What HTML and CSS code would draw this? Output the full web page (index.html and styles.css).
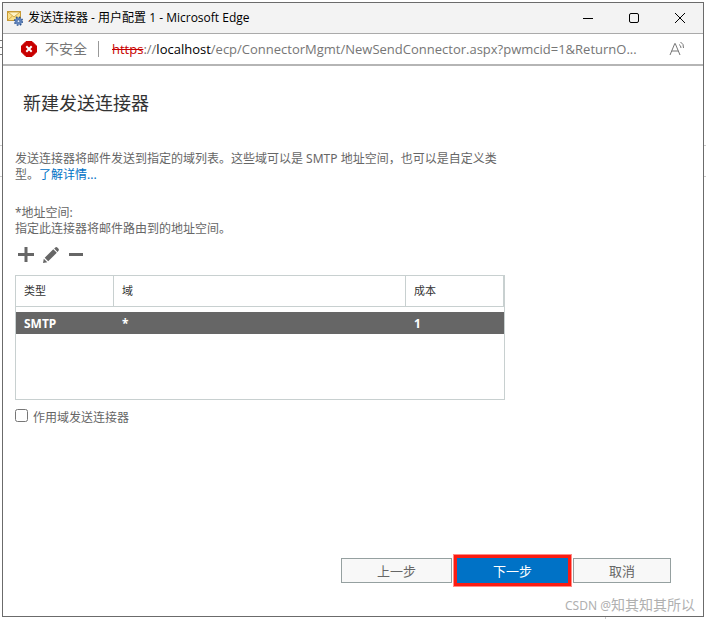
FILE: index.html
```html
<!DOCTYPE html>
<html lang="zh-CN">
<head>
<meta charset="utf-8">
<title>发送连接器 - 用户配置 1 - Microsoft Edge</title>
<link rel="stylesheet" href="styles.css">
</head>
<body>
<div class="window">
  <header class="titlebar">
    <svg class="app-icon" width="16" height="16" viewBox="0 0 16 16" aria-hidden="true">
      <rect x="0.5" y="1.5" width="13" height="9" fill="#fbe08a" stroke="#c79a35"/>
      <path d="M1 10l4.500-4M13 10L8.500 6" stroke="#d9ad4a" fill="none"/>
      <path d="M1 2l6 5 6-5z" fill="#fff3c4" stroke="#c79a35" stroke-width=".8"/>
      <circle cx="11.500" cy="11.200" r="3.600" fill="#5f83bd"/>
      <circle cx="11.500" cy="11.200" r="4" fill="none" stroke="#2f5690" stroke-width="1.500" stroke-dasharray="1.600 1.540"/>
      <circle cx="11.500" cy="11.200" r="1.300" fill="#e6eefb" stroke="#2f5690" stroke-width=".6"/>
    </svg>
    <span class="window-title">发送连接器 - 用户配置 1 - Microsoft Edge</span>
    <div class="window-controls">
      <button type="button" aria-label="最小化"><svg width="12" height="12" viewBox="0 0 12 12"><path d="M1 6.500h10"/></svg></button>
      <button type="button" aria-label="最大化"><svg width="12" height="12" viewBox="0 0 12 12"><rect x="1.500" y="1.500" width="9" height="9" rx="1.500"/></svg></button>
      <button type="button" aria-label="关闭"><svg width="12" height="12" viewBox="0 0 12 12"><path d="M1 1l10 10M11 1L1 11"/></svg></button>
    </div>
  </header>

  <div class="addressbar">
    <svg class="warn-icon" width="16" height="16" viewBox="0 0 16 16" aria-hidden="true">
      <path d="M5 .5h6L15.500 5v6L11 15.500H5L.5 11V5z" fill="#c80000" stroke="#c80000" stroke-linejoin="round"/>
      <path d="M5.300 5.300l5.400 5.400M10.700 5.300l-5.400 5.400" stroke="#fff" stroke-width="2"/>
    </svg>
    <span class="security">不安全</span>
    <span class="divider"></span>
    <span class="url"><s>https</s>://<b>localhost</b>/ecp/ConnectorMgmt/NewSendConnector.aspx?pwmcid=1&amp;ReturnO...</span>
    <button type="button" class="read-aloud" aria-label="大声朗读">
      <svg width="18" height="16" viewBox="0 0 18 16"><path d="M1 14L5.800 2.500h.4L11 14M2.700 10h6.600M10 3.500q2 1 2 3.500M11.500 1q3.500 2 3 6"/></svg>
    </button>
  </div>

  <main class="page">
    <h1>新建发送连接器</h1>
    <p class="intro">发送连接器将邮件发送到指定的域列表。这些域可以是 SMTP 地址空间，也可以是自定义类型。<a href="#">了解详情...</a></p>

    <section class="address-space">
      <h2>*地址空间:</h2>
      <p>指定此连接器将邮件路由到的地址空间。</p>
      <div class="toolbar">
        <button type="button" aria-label="添加"><svg width="16" height="16" viewBox="0 0 16 16"><path d="M6.500 0h3v6H16v3H9.500v6h-3V9H0V6h6.500z"/></svg></button>
        <button type="button" aria-label="编辑"><svg width="16" height="16" viewBox="0 0 16 16"><path d="M0 16l.8-4.300 3.500 3.500zM1.700 10.700L10.300 2.300l3.500 3.500-8.600 8.400zM11.200 1.500L12.300.5q1-.8 2 0l1.200 1.200q.8 1 0 2l-1 1.200z"/></svg></button>
        <button type="button" aria-label="删除"><svg width="16" height="16" viewBox="0 0 16 16"><path d="M1 6h14v3H1z"/></svg></button>
      </div>
      <div class="grid">
        <table>
          <colgroup><col class="col-type"><col><col class="col-cost"></colgroup>
          <thead><tr><th>类型</th><th>域</th><th>成本</th></tr></thead>
          <tbody><tr><td>SMTP</td><td>*</td><td>1</td></tr></tbody>
        </table>
      </div>
      <div class="scoped">
        <input type="checkbox" id="scoped">
        <label for="scoped">作用域发送连接器</label>
      </div>
    </section>

    <footer class="actions">
      <button type="button">上一步</button>
      <button type="button" class="primary">下一步</button>
      <button type="button" class="cancel">取消</button>
    </footer>
  </main>
  <span class="watermark"><small>CSDN @</small>知其知其所以</span>
</div>
</body>
</html>
```
FILE: styles.css
```css
* { box-sizing: border-box; }

body {
  margin: 0;
  padding: 2px;
  font: 12px/16px "Noto Sans", "Noto Sans CJK SC", sans-serif;
  color: #666;
  background:
    linear-gradient(#777, #777) 0 40px / 3px 1px no-repeat,
    linear-gradient(#777, #777) 0 47px / 3px 1px no-repeat,
    linear-gradient(#777, #777) 0 54px / 3px 1px no-repeat,
    linear-gradient(#ccc, #ccc) 0 145px / 100% 1px no-repeat,
    linear-gradient(#ccc, #ccc) 0 176px / 100% 1px no-repeat,
    linear-gradient(#ccc, #ccc) 605px 100% / 1px 2px no-repeat,
    #fff;
}

button {
  margin: 0;
  padding: 0;
  border: 0;
  background: none;
  font: inherit;
  color: inherit;
}

svg {
  display: block;
  flex: none;
}

.window {
  position: relative;
  display: flex;
  flex-direction: column;
  min-height: calc(100vh - 4px);
  border: 1px solid #6b6b6b;
  background: #fff;
}

.titlebar {
  display: flex;
  align-items: center;
  height: 31px;
  padding-left: 4px;
  border-bottom: 1px solid #aaa;
  background: #f3f3f3;
  color: #000;
}

.window-title {
  flex: 1;
  margin-left: 5px;
  font-family: "Open Sans", "Noto Sans CJK SC", sans-serif;
}

.window-controls { display: flex; }

.window-controls button {
  display: grid;
  place-items: center;
  width: 46px;
  height: 30px;
}

.window-controls svg,
.read-aloud svg {
  fill: none;
  stroke: #000;
}

.addressbar {
  display: flex;
  align-items: center;
  height: 32px;
  padding: 0 16px 0 18px;
  border-bottom: 2px solid #b5b5b5;
  font-size: 14px;
  line-height: 20px;
  color: #767676;
}

.security {
  margin-left: 8px;
  white-space: nowrap;
}

.divider {
  width: 1px;
  height: 16px;
  margin: 0 13px 0 11px;
  background: #999;
}

.url {
  flex: 1;
  white-space: nowrap;
  font-family: "Open Sans", sans-serif;
  font-size: 13px;
}

.url s { color: #c80000; }

.url b {
  font-weight: 400;
  color: #000;
}

.read-aloud svg { stroke: #767676; }

.page {
  flex: 1;
  display: flex;
  flex-direction: column;
  padding: 25px 32px 33px 12px;
}

h1 {
  margin: 0 0 36px 8px;
  font-size: 18px;
  line-height: 24px;
  font-weight: 400;
  color: #333;
}

.intro {
  max-width: 490px;
  margin: 0 0 22px;
}

.intro a {
  color: #0072c6;
  text-decoration: none;
}

.address-space { max-width: 490px; }

.address-space h2,
.address-space p {
  margin: 0;
  font-size: 12px;
  font-weight: 400;
}

.toolbar {
  display: flex;
  gap: 9px;
  padding: 10px 3px 12px;
}

.toolbar svg { fill: #666; }

.grid {
  min-height: 125px;
  border: 1px solid #c8d0d0;
}

table {
  width: 100%;
  table-layout: fixed;
  border-spacing: 0;
}

.col-type { width: 98px; }
.col-cost { width: 98px; }

th {
  height: 31px;
  padding: 0 8px;
  border-right: 1px solid #c8d0d0;
  border-bottom: 1px solid #c8d0d0;
  text-align: left;
  font-size: 11px;
  font-weight: 400;
  color: #333;
}

td {
  height: 27px;
  padding: 2px 8px 0;
  border-top: 5px solid #fff;
  background: #666;
  font-weight: 700;
  color: #fff;
}

.scoped {
  display: flex;
  gap: 5px;
  margin-top: 9px;
}

.scoped input {
  width: 13px;
  height: 13px;
  margin: 0;
}

.scoped label { padding-top: 1px; }

.actions {
  display: flex;
  justify-content: flex-end;
  gap: 5px;
  margin-top: auto;
}

.actions button {
  width: 111px;
  height: 25px;
  border: 1px solid #95a0a0;
  background: #f8f8f8;
  font-size: 13px;
  line-height: 20px;
}

.actions .primary {
  border-color: #0072c6;
  background: #0072c6;
  color: #fff;
  box-shadow: 0 0 0 3px #fb1c12, 0 0 0 4px #ff8d88;
}

.actions .cancel { width: 98px; }

.watermark {
  position: absolute;
  right: 8px;
  bottom: 0;
  font-size: 14px;
  line-height: 20px;
  color: #b0b0b0;
}

.watermark small { font-size: 12px; }
```
